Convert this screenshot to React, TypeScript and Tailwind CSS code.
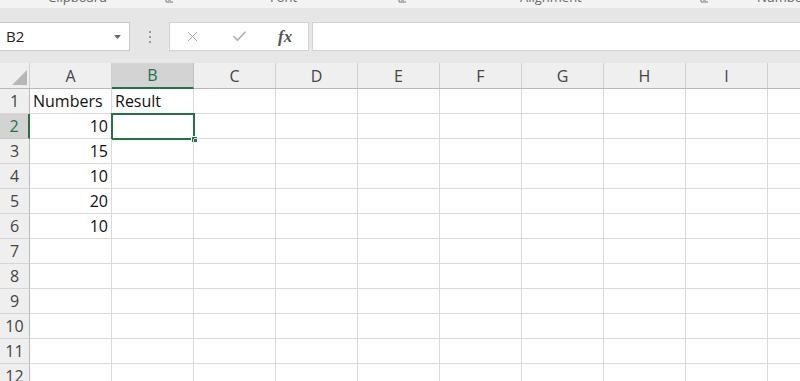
import { X, Check } from "lucide-react";

const cols = ["A", "B", "C", "D", "E", "F", "G", "H", "I", "J"];
const rows = [1, 2, 3, 4, 5, 6, 7, 8, 9, 10, 11, 12];

const data: { [key: string]: { v: string; right?: boolean } } = {
  A1: { v: "Numbers" },
  B1: { v: "Result" },
  A2: { v: "10", right: true },
  A3: { v: "15", right: true },
  A4: { v: "10", right: true },
  A5: { v: "20", right: true },
  A6: { v: "10", right: true },
};

function Launcher() {
  return (
    <svg width="8" height="8" viewBox="0 0 8 8" className="text-[#777]">
      <path d="M1 0 V7 H8" stroke="currentColor" strokeWidth="1" fill="none" />
      <path d="M2 1 L6 5 M6 2 V5 H3" stroke="currentColor" strokeWidth="1" fill="none" />
    </svg>
  );
}

export default function App() {
  return (
    <div
      className="w-[800px] h-[381px] overflow-hidden flex flex-col bg-white select-none"
      style={{ fontFamily: "'Open Sans', 'Liberation Sans', sans-serif" }}
    >
      {/* ribbon group labels, cut off at the top */}
      <div className="h-[8px] shrink-0 bg-[#f3f3f3] overflow-hidden text-[13px] text-[#666] leading-[13px]">
        <div className="flex items-start -mt-[9px] whitespace-nowrap">
          <span className="ml-[48px] w-[117px] shrink-0">Clipboard</span>
          <span className="mt-[4px] shrink-0"><Launcher /></span>
          <span className="ml-[97px] w-[128px] shrink-0">Font</span>
          <span className="mt-[4px] shrink-0"><Launcher /></span>
          <span className="ml-[114px] w-[180px] shrink-0">Alignment</span>
          <span className="mt-[4px] shrink-0"><Launcher /></span>
          <span className="ml-[49px] shrink-0">Number</span>
        </div>
      </div>

      {/* formula bar */}
      <div className="h-[55px] shrink-0 bg-[#e6e6e6] flex items-start pt-[14px]">
        <div className="w-[130px] h-[29px] bg-white border border-l-0 border-[#c8c8c8] flex items-center justify-between pl-[6px] pr-[8px]">
          <span className="text-[15px] text-[#222]">B2</span>
          <svg width="7" height="4" viewBox="0 0 7 4">
            <path d="M0 0 H7 L3.5 4 Z" fill="#666" />
          </svg>
        </div>
        <div className="w-[39px] h-[29px] flex flex-col items-center justify-center gap-[3px]">
          <span className="w-[2px] h-[2px] bg-[#999]" />
          <span className="w-[2px] h-[2px] bg-[#999]" />
          <span className="w-[2px] h-[2px] bg-[#999]" />
        </div>
        <div className="w-[140px] h-[29px] bg-white border border-[#d2d2d2] flex items-center">
          <span className="w-[46px] flex justify-center">
            <X size={17} strokeWidth={1.4} className="text-[#a8a8a8]" />
          </span>
          <span className="w-[47px] flex justify-center">
            <Check size={17} strokeWidth={2.4} className="text-[#b0b0b0]" />
          </span>
          <span
            className="w-[46px] text-center text-[17px] italic text-[#555] font-semibold"
            style={{ fontFamily: "'Liberation Serif', serif" }}
          >
            fx
          </span>
        </div>
        <div className="ml-[3px] flex-1 h-[29px] bg-white border border-r-0 border-[#d2d2d2]" />
      </div>

      {/* grid */}
      <div className="flex-1 overflow-hidden">
        {/* column headers */}
        <div className="flex h-[26px] bg-[#efefef] border-b border-[#b9b9b9]">
          <div className="w-[30px] shrink-0 border-r border-[#d0d0d0] flex items-end justify-end pr-[2px] pb-[3px]">
            <svg width="15" height="15" viewBox="0 0 15 15">
              <path d="M15 0 V15 H0 Z" fill="#b7b7b7" />
            </svg>
          </div>
          {cols.map((c) => (
            <div
              key={c}
              className={
                c === "B"
                  ? "w-[82px] shrink-0 bg-[#d3d3d3] border-r border-[#c0c0c0] border-b-2 border-b-[#217346] -mb-px flex items-center justify-center text-[16px] text-[#217346]"
                  : "w-[82px] shrink-0 border-r border-[#d0d0d0] flex items-center justify-center text-[16px] text-[#444]"
              }
            >
              {c}
            </div>
          ))}
        </div>

        {rows.map((r) => (
          <div key={r} className="flex h-[25px]">
            <div
              className={
                r === 2
                  ? "w-[30px] shrink-0 bg-[#d3d3d3] border-r-2 border-[#217346] border-b border-b-[#c8c8c8] flex items-center justify-center text-[16px] text-[#217346]"
                  : "w-[30px] shrink-0 bg-[#efefef] border-r border-[#b9b9b9] border-b border-b-[#d6d6d6] flex items-center justify-center text-[16px] text-[#444]"
              }
            >
              {r}
            </div>
            {cols.map((c) => {
              const cell = data[`${c}${r}`];
              const selected = c === "B" && r === 2;
              return (
                <div
                  key={c}
                  className={`w-[82px] shrink-0 relative border-r border-b border-[#dadada] flex items-center px-[3px] text-[16px] text-[#111] whitespace-nowrap ${
                    cell?.right ? "justify-end" : "justify-start"
                  }`}
                >
                  {cell?.v}
                  {selected && (
                    <div className="absolute -left-px -top-px w-[84px] h-[27px] border-2 border-[#217346]">
                      <div className="absolute -right-[5px] -bottom-[5px] w-[7px] h-[7px] bg-[#217346] border border-white" />
                    </div>
                  )}
                </div>
              );
            })}
          </div>
        ))}
      </div>
    </div>
  );
}
